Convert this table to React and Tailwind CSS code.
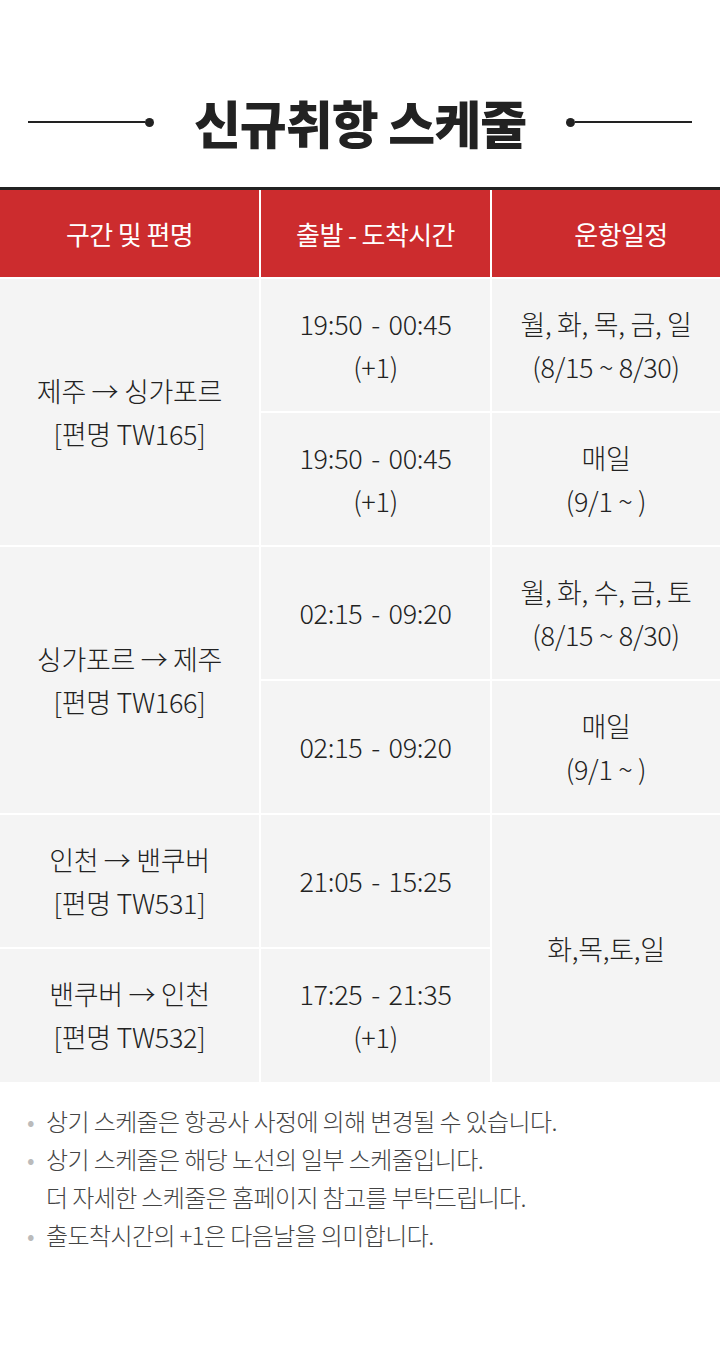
const FONT = '"Noto Sans CJK KR", "Noto Sans", sans-serif';

const GROUPS = [
  {
    route: ['제주 → 싱가포르', '[편명 TW165]'],
    rows: [
      { time: ['19:50 - 00:45', '(+1)'], days: ['월, 화, 목, 금, 일', '(8/15 ~ 8/30)'] },
      { time: ['19:50 - 00:45', '(+1)'], days: ['매일', '(9/1 ~ )'] },
    ],
  },
  {
    route: ['싱가포르 → 제주', '[편명 TW166]'],
    rows: [
      { time: ['02:15 - 09:20'], days: ['월, 화, 수, 금, 토', '(8/15 ~ 8/30)'] },
      { time: ['02:15 - 09:20'], days: ['매일', '(9/1 ~ )'] },
    ],
  },
];

function Lines({ lines }) {
  return lines.map((l, i) => <div key={i}>{l}</div>);
}

function Side({ flip }) {
  return (
    <div className={`flex items-center w-[126px] ${flip ? 'flex-row-reverse' : ''}`}>
      <div className="flex-1 h-[2px] bg-[#222]" />
      <div className="w-[9px] h-[9px] rounded-full bg-[#222]" />
    </div>
  );
}

const cell = 'border-2 border-white text-center align-middle h-[134px]';

export default function App() {
  return (
    <div className="w-[720px] h-[1348px] bg-white" style={{ fontFamily: FONT }}>
      <div className="flex items-center justify-between px-[28px] pt-[94px] pb-[37px]">
        <Side />
        <h1 className="text-[51px] leading-[56px] font-black text-[#222] tracking-[-1px]">신규취항 스케줄</h1>
        <Side flip />
      </div>

      <table className="w-full border-collapse table-fixed text-[27px] leading-[43px] tracking-[-0.3px] text-[#222] font-light">
        <colgroup>
          <col className="w-[260px]" />
          <col className="w-[231px]" />
          <col />
        </colgroup>
        <thead>
          <tr className="bg-[#cc2c2e] text-white border-t-[3px] border-[#222] text-[26px] tracking-[-0.6px]">
            <th className="h-[89px] font-normal border-x-2 border-white border-l-0">구간 및 편명</th>
            <th className="font-normal border-x-2 border-white">출발 - 도착시간</th>
            <th className="font-normal border-x-2 border-white border-r-0 pl-[30px]">운항일정</th>
          </tr>
        </thead>
        <tbody className="bg-[#f4f4f4]">
          {GROUPS.map((g, gi) =>
            g.rows.map((r, ri) => (
              <tr key={`${gi}-${ri}`}>
                {ri === 0 && (
                  <td rowSpan={2} className="border-2 border-white border-l-0 text-center align-middle">
                    <Lines lines={g.route} />
                  </td>
                )}
                <td className={`${cell} [word-spacing:3px]`}>
                  <Lines lines={r.time} />
                </td>
                <td className={`${cell} border-r-0`}>
                  <Lines lines={r.days} />
                </td>
              </tr>
            ))
          )}
          <tr>
            <td className={`${cell} border-l-0`}>
              <Lines lines={['인천 → 밴쿠버', '[편명 TW531]']} />
            </td>
            <td className={`${cell} [word-spacing:3px]`}>21:05 - 15:25</td>
            <td rowSpan={2} className="border-2 border-white border-r-0 border-b-0 text-center align-middle">
              화,목,토,일
            </td>
          </tr>
          <tr>
            <td className={`${cell} border-l-0 border-b-0`}>
              <Lines lines={['밴쿠버 → 인천', '[편명 TW532]']} />
            </td>
            <td className={`${cell} border-b-0 [word-spacing:3px]`}>
              <Lines lines={['17:25 - 21:35', '(+1)']} />
            </td>
          </tr>
        </tbody>
      </table>

      <ul className="pt-[20px] pl-[27px] text-[24px] leading-[38px] tracking-[-0.6px] text-[#444] font-light">
        <li className="flex">
          <span className="w-[19px] text-[#bbb]">•</span>상기 스케줄은 항공사 사정에 의해 변경될 수 있습니다.
        </li>
        <li className="flex">
          <span className="w-[19px] shrink-0 text-[#bbb]">•</span>
          <div>
            상기 스케줄은 해당 노선의 일부 스케줄입니다.
            <br />더 자세한 스케줄은 홈페이지 참고를 부탁드립니다.
          </div>
        </li>
        <li className="flex">
          <span className="w-[19px] text-[#bbb]">•</span>출도착시간의 +1은 다음날을 의미합니다.
        </li>
      </ul>
    </div>
  );
}
